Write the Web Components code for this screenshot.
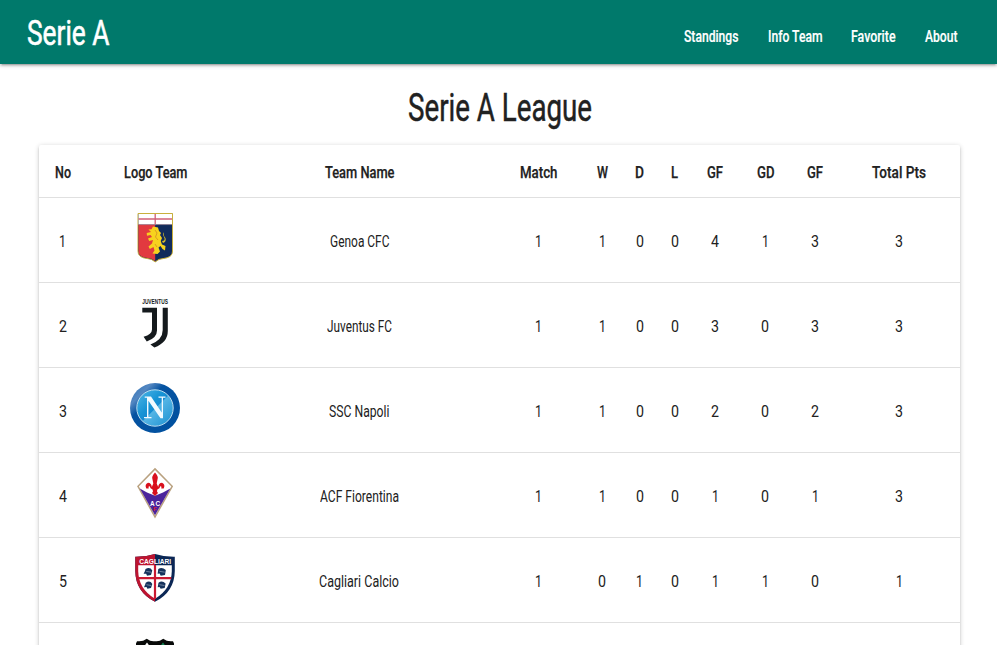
<!DOCTYPE html>
<html lang="en">
<head>
<meta charset="utf-8">
<title>Serie A</title>
<style>
html,body{margin:0;height:645px;overflow:hidden;background:#fff}
body{font-family:Roboto,"Liberation Sans",sans-serif;color:#212121}
</style>
</head>
<body>
<league-app></league-app>
<script>
// Text condensed horizontally to the width given in "w".
class CondensedText extends HTMLElement{
  constructor(){
    super();
    this.attachShadow({mode:'open'}).innerHTML=`<style>
      :host{display:inline-block;white-space:nowrap;text-align:left}
      span{display:inline-block;transform-origin:0 50%}
    </style><span><slot></slot></span>`;
  }
  connectedCallback(){
    const s=this.shadowRoot.querySelector('span'),w=+this.getAttribute('w');
    const natural=s.getBoundingClientRect().width;
    this.style.width=w+'px';
    if(natural) s.style.transform=`scaleX(${w/natural})`;
  }
}
customElements.define('condensed-text',CondensedText);

const LOGOS={
genoa:`<path d="M8 .5H42.5V38Q42.5 43.3 37 44.8L29 46.4L25.2 48.9L21.5 46.4L13.5 44.8Q8 43.3 8 38Z" fill="#112b5b" stroke="#c9b03c" stroke-width="1"/>
 <path d="M8.5 11H25.2V48L21.6 45.8L13.8 44.3Q8.5 43 8.5 38Z" fill="#e2393f"/>
 <path d="M8.5 1H42V11.5H8.5Z" fill="#fff"/><path d="M8.5 6H42M25.2 1V11.5" stroke="#cf6078" stroke-width="1.3"/><path d="M8.5 11.6H42" stroke="#8b7487" stroke-width=".7"/>
 <path d="M23 13.5L28 14.5L29 18L31 20L30 22L32 25L30.7 28L32 31.5L35.5 33L35 37.5L32.5 36L30.5 33L28.5 34.5L30 38.5L27.5 41L22.5 40.5L24.5 37.5L23.5 34L19.8 36L18.5 33.5L22 30.5L23 27L19.2 28L18 25.5L22 24L20.5 22L17 22.7L16.7 20L21 19L18.5 16.5L21.5 16.2Z" fill="#f7d21e"/>
 <path d="M32 28Q36 28 34 24Q32 21 34 19.3Q33 23 35.5 25Q36.5 29 33 30Z" fill="#d8bd2a"/><path d="M25 17L27 20L25.5 24L28 27M25 31L27 34" stroke="#d58b24" stroke-width=".8" fill="none"/>`,
juve:`<text x="12.2" y="5.9" font-family="Liberation Sans" font-weight="700" font-size="8" textLength="25.8" lengthAdjust="spacingAndGlyphs" fill="#151a1d">JUVENTUS</text>
 <path d="M12.3 9.8H27V32.5Q27 40 16.8 43.4L13.6 38.8Q22 36.4 22 31.5V14.4H12.3Z" fill="#151a1d"/>
 <path d="M32.7 9.8H37.8V33Q37.8 44.5 24.4 49.5L20.4 46.4Q32.7 42 32.7 32Z" fill="#151a1d"/>`,
napoli:`<defs><linearGradient id="o" x2="1" y2="1"><stop stop-color="#2871b8"/><stop offset=".22" stop-color="#5487c1"/><stop offset=".36" stop-color="#0553a1"/><stop offset="1" stop-color="#00509f"/></linearGradient>
 <linearGradient id="i" x2="1" y2="1"><stop stop-color="#53b8e6"/><stop offset=".4" stop-color="#1693d5"/><stop offset=".5" stop-color="#168bd1"/><stop offset=".52" stop-color="#55b5e5"/><stop offset="1" stop-color="#188fd0"/></linearGradient></defs>
 <circle cx="25" cy="25" r="25" fill="url(#o)"/><circle cx="25" cy="25" r="18.2" fill="url(#i)" stroke="#b9dcef" stroke-width="1"/>
 <path d="M14.7 13.6H21L31.7 29.5V14.8H28.5V13.6H35.5V14.8H33V35.2H30.5L18.4 17.8V34H21.5V35.2H14V34H17V14.8H14.7Z" fill="#f2faff"/>`,
viola:`<path d="M25 .9L42.2 18.3L25 49L8 18.3Z" fill="#fff" stroke="#b9a17f" stroke-width="1.5"/>
 <path d="M9.8 20.6L17 24.6L25 27.8L33 24.6L40.3 20.6L25 47.2Z" fill="#4b249b"/>
 <path d="M25 4.6Q28.8 8.5 27.5 11.5L26.7 15.5L28.2 19Q28.5 15 32 14.8Q35.7 16.4 33.7 20.4L31.3 20.6Q32 17.8 30.3 18.3Q30 20.5 27.3 21.5L27 23.5L28 25L25 28L22 25L23 23.5L22.6 21.5Q20 20.5 19.7 18.3Q18 17.8 18.7 20.6L16.3 20.4Q14.3 16.4 18 14.8Q21.5 15 21.8 19L23.3 15.5L22.5 11.5Q21.2 8.5 25 4.6Z" fill="#d90f1c"/>
 <text x="20" y="37.5" font-family="Liberation Sans" font-size="6.4" font-weight="700" fill="#fff">A</text><text x="25.6" y="37.5" font-family="Liberation Sans" font-size="6.4" font-weight="700" fill="#fff">C</text><text x="23.3" y="42.6" font-family="Liberation Sans" font-size="5.5" font-weight="700" fill="#e11b31">F</text>`,
cagliari:`<path d="M5.3 3.8Q15 4 25 .9Q35 4 44.8 3.8V18Q44.5 39 25 48.8Q5.5 39 5.3 18Z" fill="#0b2755"/><path d="M5.3 3.8Q15 4 25 .9V48.8Q5.5 39 5.3 18Z" fill="#bd1430"/>
 <path d="M8.2 12.3H41.8V18Q41.5 36 25 45.7Q8.5 36 8.2 18Z" fill="#fff"/><path d="M25 12V46M8.7 25.2H41.3" stroke="#c91932" stroke-width="2.2"/>
 <g fill="#15325c"><path d="M15.5 16Q20 13.5 22.3 17.5L21 22L17 22.8L16.2 20.8L13.6 20.8L15 18Z"/><path d="M28.3 16Q32 13.5 35.8 17L35 22L30.7 22.8L29.6 20.6L27.6 20.7Z"/><path d="M15.7 29.8Q20 26.8 22.3 31L21 35L17.4 35.7L16.5 34L14 34.2L15.2 31.5Z"/><path d="M28.5 29.8Q32 26.8 35.6 30.5L34.7 35L30.7 35.7L29.5 34L27.7 34.2Z"/></g>
 <path d="M16.2 18.4L21.3 19.2M29.4 18.3L34.7 19.2M16.4 31.7L21.2 32.5M29.4 31.7L34.5 32.5" stroke="#c7d1de" stroke-width=".5"/>
 <text x="9.2" y="11" font-family="Liberation Sans" font-size="7.4" font-weight="700" textLength="32" lengthAdjust="spacingAndGlyphs" fill="#fff">CAGLIARI</text>`,
last:`<path d="M6 5.5L7 3.2Q12.5 4 16.8 .8Q21 4 25 3.2Q29 4 33.2 .8Q37.5 4 43 3.2L44 5.5V30Q43 43 25 50Q7 43 6 30Z" fill="#080a09"/><path d="M15.2 7Q16 6 17 4.6Q18 6 18.8 7Z" fill="#fff"/><path d="M31.2 7Q32 6 33 4.6Q34 6 34.8 7Z" fill="#128452"/>`
};
class TeamLogo extends HTMLElement{
  connectedCallback(){
    this.attachShadow({mode:'open'}).innerHTML=`<style>:host{display:block;width:50px;height:50px}svg{display:block;overflow:visible}</style><svg width="50" height="50" viewBox="0 0 50 50">${LOGOS[this.getAttribute('team')]}</svg>`;
  }
}
customElements.define('team-logo',TeamLogo);

class NavBar extends HTMLElement{
  connectedCallback(){
    const links=[['Standings',54.5],['Info Team',54.5],['Favorite',44.5],['About',32.5]];
    this.attachShadow({mode:'open'}).innerHTML=`<style>
      :host{display:block;position:relative;background:#00796b;color:#fff;height:64px;box-shadow:0 2px 2px 0 rgba(0,0,0,.14),0 3px 1px -2px rgba(0,0,0,.12),0 1px 5px 0 rgba(0,0,0,.2)}
      nav{display:flex;justify-content:space-between;height:64px;box-sizing:border-box;padding:0 40px 0 27px}
      .brand{font-size:35px;line-height:68px;-webkit-text-stroke:.6px}
      ul{display:flex;gap:29px;list-style:none;margin:0;padding:0;font-size:16.7px;font-weight:500;line-height:74px;-webkit-text-stroke:.2px}
    </style><nav><condensed-text class="brand" w="82.5">Serie A</condensed-text><ul>${links.map(l=>`<li><condensed-text w="${l[1]}">${l[0]}</condensed-text></li>`).join('')}</ul></nav>`;
  }
}
customElements.define('nav-bar',NavBar);

class StandingsRow extends HTMLElement{
  connectedCallback(){
    const head=this.hasAttribute('head');
    const cells=JSON.parse(this.getAttribute('cells'));
    this.attachShadow({mode:'open'}).innerHTML=`<style>
      :host{display:grid;grid-template-columns:47px 138px 270px 89px 38px 37px 33px 48px 52px 48px 121px;height:84px;border-bottom:1px solid rgba(0,0,0,.12);font-size:16.7px;line-height:24px}
      :host([head]){height:52px;font-weight:500;-webkit-text-stroke:.25px}
      div{display:flex;justify-content:center;align-items:center;padding:4px 0 0 .6px}
      .logo{padding:0 0 4px}
      .total{padding-right:1px}
    </style>${cells.map((c,i)=>{
      if(i===1&&!head) return `<div class="logo"><team-logo team="${c}"></team-logo></div>`;
      const [t,w]=Array.isArray(c)?c:[c,c==='1'?7:8];
      return `<div${i===10?' class="total"':''}><condensed-text w="${w}">${t}</condensed-text></div>`;
    }).join('')}`;
  }
}
customElements.define('standings-row',StandingsRow);

class LeagueApp extends HTMLElement{
  connectedCallback(){
    const head=[['No',16],['Logo Team',63.5],['Team Name',69.5],['Match',37.5],['W',11],['D',9],['L',7],['GF',16],['GD',17.5],['GF',16],['Total Pts',54]];
    const teams=[
      ['1','genoa',['Genoa CFC',59.5],'1','1','0','0','4','1','3','3'],
      ['2','juve',['Juventus FC',65],'1','1','0','0','3','0','3','3'],
      ['3','napoli',['SSC Napoli',60.5],'1','1','0','0','2','0','2','3'],
      ['4','viola',['ACF Fiorentina',79],'1','1','0','0','1','0','1','3'],
      ['5','cagliari',['Cagliari Calcio',80],'1','0','1','0','1','1','0','1'],
      ['','last','','','','','','','','','']];
    const row=(c,h)=>`<standings-row${h?' head':''} cells='${JSON.stringify(c)}'></standings-row>`;
    this.attachShadow({mode:'open'}).innerHTML=`<style>
      :host{display:block;height:645px;overflow:hidden}
      h1{font-size:38.8px;font-weight:400;line-height:46px;margin:0;padding:21px 0 14px 2px;text-align:center;-webkit-text-stroke:.5px}
      section{margin:0 37px 0 39px;background:#fff;border-radius:2px;box-shadow:0 2px 2px 0 rgba(0,0,0,.14),0 3px 1px -2px rgba(0,0,0,.12),0 1px 5px 0 rgba(0,0,0,.2)}
    </style><nav-bar></nav-bar><main><h1><condensed-text w="184">Serie A League</condensed-text></h1><section>${row(head,true)}${teams.map(t=>row(t)).join('')}</section></main>`;
  }
}
customElements.define('league-app',LeagueApp);
</script>
</body>
</html>
